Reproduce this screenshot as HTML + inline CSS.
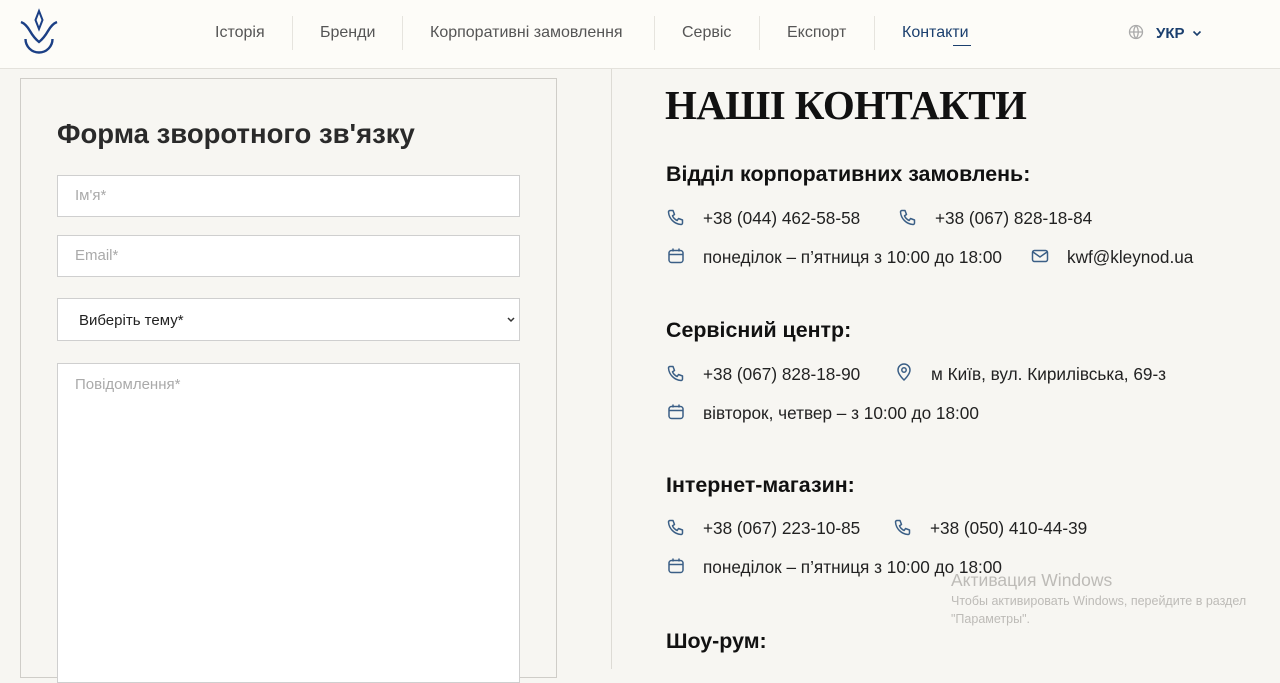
<!DOCTYPE html>
<html><head><meta charset="utf-8"><style>
*{margin:0;padding:0;box-sizing:border-box}
body{width:1280px;height:660px;overflow:hidden;background:#f7f6f2;font-family:"Liberation Sans","DejaVu Sans",sans-serif;position:relative;color:#1c1c1c}
.hdr{position:absolute;left:0;top:0;width:1280px;height:69px;background:#fdfcf8;border-bottom:1px solid #e4e2dc}
.nav{position:absolute;top:24px;font-size:16px;color:#555}
.sep{position:absolute;top:16px;width:1px;height:34px;background:#e6e4de}
.a{position:absolute}
.vl{position:absolute;left:611px;top:69px;width:1px;height:600px;background:#dddbd5}
.box{position:absolute;left:20px;top:78px;width:537px;height:600px;border:1px solid #cfcdc8;background:#f7f6f2}
.inp{position:absolute;left:57px;width:463px;background:#fff;border:1px solid #cfcfcf;font-size:15px;color:#aaa;padding-left:17px}
.h3{position:absolute;left:666px;font-size:21.4px;font-weight:bold;color:#111}
.t{position:absolute;font-size:17.2px;color:#222}
.ic{position:absolute}
.wm{position:absolute;left:951px;color:#bdbbb7}
</style></head><body>
<div class="hdr">
<svg class="a" style="left:18px;top:8px" width="42" height="48" viewBox="0 0 42 48" fill="none" stroke="#1b3f85" stroke-width="2.4">
<path d="M21 3 L24.5 12 L21 21 L17.5 12 Z" stroke-width="2"/>
<path d="M3 14 Q8 16 12 23 Q16 30 21 34 Q26 30 30 23 Q34 16 39 14" />
<path d="M7.5 31 A13.5 13.5 0 0 0 34.5 31"/>
</svg>
<div class="nav" style="left:215px">Історія</div>
<div class="sep" style="left:292px"></div>
<div class="nav" style="left:320px">Бренди</div>
<div class="sep" style="left:402px"></div>
<div class="nav" style="left:430px">Корпоративні замовлення</div>
<div class="sep" style="left:654px"></div>
<div class="nav" style="left:682px">Сервіс</div>
<div class="sep" style="left:759px"></div>
<div class="nav" style="left:787px">Експорт</div>
<div class="sep" style="left:874px"></div>
<div class="nav" style="left:902px;color:#1b3f6e">Контакти</div>
<div class="a" style="left:953px;top:45px;width:18px;height:1px;background:#1b3f6e"></div>
<svg class="a" style="left:1128px;top:24px" width="16" height="16" viewBox="0 0 16 16" fill="none" stroke="#aaa" stroke-width="1.3"><circle cx="8" cy="8" r="6.5"/><path d="M1.5 8h13M8 1.5c-3 3.5-3 9.5 0 13M8 1.5c3 3.5 3 9.5 0 13"/></svg>
<div class="a" style="left:1156px;top:25px;font-size:15px;font-weight:bold;color:#1b3f6e">УКР</div>
<svg class="a" style="left:1192px;top:30px" width="10" height="7" viewBox="0 0 10 7" fill="none" stroke="#1b3f6e" stroke-width="1.6"><path d="M1.5 1.5L5 5l3.5-3.5"/></svg>
</div>
<div class="vl"></div>
<div class="box"></div>
<div class="a" style="left:57px;top:118px;font-size:27.5px;font-weight:bold;color:#2a2a2a">Форма зворотного зв'язку</div>
<div class="inp" style="top:175px;height:42px;line-height:40px">Ім'я*</div>
<div class="inp" style="top:235px;height:42px;line-height:40px">Email*</div>
<div class="inp" style="top:298px;height:43px;line-height:43px;color:#222;padding-left:21px">Виберіть тему*<svg style="position:absolute;right:4px;top:18px" width="8" height="6" viewBox="0 0 8 6" fill="none" stroke="#333" stroke-width="1.5"><path d="M1 1l3 3 3-3"/></svg></div>
<div class="inp" style="top:363px;height:320px;padding-top:12px">Повідомлення*</div>

<div class="a" style="left:665px;top:81px;font-family:'Liberation Serif','DejaVu Serif',serif;font-size:41px;font-weight:bold;color:#111;letter-spacing:-0.6px">НАШІ КОНТАКТИ</div>

<div class="h3" style="top:162px">Відділ корпоративних замовлень:</div>
<div class="h3" style="top:318px">Сервісний центр:</div>
<div class="h3" style="top:473px">Інтернет-магазин:</div>
<div class="h3" style="top:629px">Шоу-рум:</div>

<svg width="0" height="0" style="position:absolute"><defs>
<g id="ph" fill="none" stroke="#3b5f86" stroke-width="1.5" stroke-linejoin="round"><path d="M3 2.5h3l1.5 4-2 1.3a9 9 0 0 0 4.7 4.7l1.3-2 4 1.5v3a1.5 1.5 0 0 1-1.5 1.5A13.5 13.5 0 0 1 1.5 4 1.5 1.5 0 0 1 3 2.5z"/></g>
<g id="cal" fill="none" stroke="#3b5f86" stroke-width="1.5"><rect x="2" y="3.5" width="14" height="12" rx="2.5"/><path d="M2 7.5h14M6 1.5v3M12 1.5v3"/></g>
<g id="mail" fill="none" stroke="#3b5f86" stroke-width="1.5"><rect x="1.5" y="3.5" width="15" height="11" rx="2"/><path d="M2 5l7 5 7-5"/></g>
<g id="pin" fill="none" stroke="#3b5f86" stroke-width="1.5"><path d="M9 17s6-5.5 6-10A6 6 0 0 0 3 7c0 4.5 6 10 6 10z"/><circle cx="9" cy="7" r="2.2"/></g>
</defs></svg>

<svg class="ic" style="left:667px;top:208px" width="18" height="18"><use href="#ph"/></svg>
<div class="t" style="left:703px;top:208px">+38 (044) 462-58-58</div>
<svg class="ic" style="left:899px;top:208px" width="18" height="18"><use href="#ph"/></svg>
<div class="t" style="left:935px;top:208px">+38 (067) 828-18-84</div>
<svg class="ic" style="left:667px;top:247px" width="18" height="18"><use href="#cal"/></svg>
<div class="t" style="left:703px;top:247px">понеділок – п’ятниця з 10:00 до 18:00</div>
<svg class="ic" style="left:1031px;top:247px" width="18" height="18"><use href="#mail"/></svg>
<div class="t" style="left:1067px;top:247px">kwf@kleynod.ua</div>

<svg class="ic" style="left:667px;top:364px" width="18" height="18"><use href="#ph"/></svg>
<div class="t" style="left:703px;top:364px">+38 (067) 828-18-90</div>
<svg class="ic" style="left:895px;top:363px" width="18" height="18"><use href="#pin"/></svg>
<div class="t" style="left:931px;top:364px">м Київ, вул. Кирилівська, 69-з</div>
<svg class="ic" style="left:667px;top:403px" width="18" height="18"><use href="#cal"/></svg>
<div class="t" style="left:703px;top:403px">вівторок, четвер – з 10:00 до 18:00</div>

<svg class="ic" style="left:667px;top:518px" width="18" height="18"><use href="#ph"/></svg>
<div class="t" style="left:703px;top:518px">+38 (067) 223-10-85</div>
<svg class="ic" style="left:894px;top:518px" width="18" height="18"><use href="#ph"/></svg>
<div class="t" style="left:930px;top:518px">+38 (050) 410-44-39</div>
<svg class="ic" style="left:667px;top:557px" width="18" height="18"><use href="#cal"/></svg>
<div class="t" style="left:703px;top:557px">понеділок – п’ятниця з 10:00 до 18:00</div>

<div class="wm" style="top:570px;font-size:17.5px">Активация Windows</div>
<div class="wm" style="top:592px;font-size:12.5px;line-height:18px">Чтобы активировать Windows, перейдите в раздел<br>"Параметры".</div>
</body></html>
